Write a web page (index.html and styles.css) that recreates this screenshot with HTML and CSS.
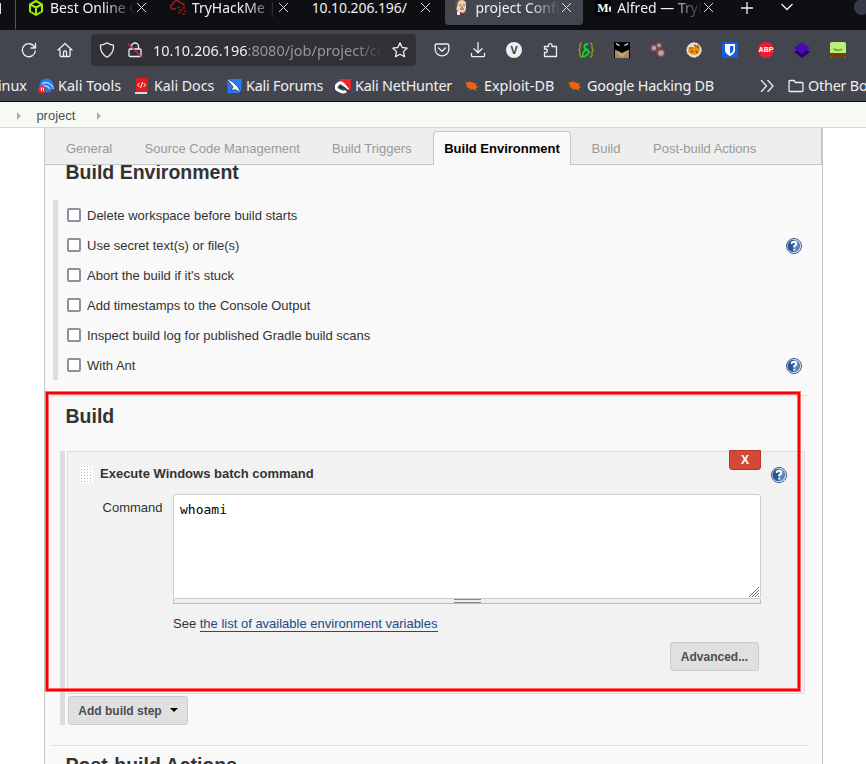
FILE: index.html
```
<!DOCTYPE html>
<html lang="en">
<head>
<meta charset="utf-8">
<title>project Config [Jenkins]</title>
<link rel="stylesheet" href="styles.css">
</head>
<body>
<header class="browser">
  <div class="tabs">
    <div class="tab-edge"><i></i></div>
    <div class="tab">
      <svg class="fav" viewBox="0 0 16 16"><path d="M8 1L14 4.300V11.500L8 15L2 11.500V4.300ZM2.500 4.600L8 7.500L13.500 4.600M8 7.500V14.500" fill="none" stroke="#9fef00" stroke-width="2" stroke-linejoin="round"/></svg>
      <span class="title t1">Best Online Cyber</span><i class="close"></i>
    </div>
    <div class="tab">
      <svg class="fav" viewBox="0 0 16 16"><path d="M6 9H3.500A2.500 2.500 0 0 1 3 4A4 4 0 0 1 10.500 3A3 3 0 0 1 14 6.500" fill="none" stroke="#b3121d" stroke-width="1.500"/><path d="M7 7.500h3M12 8h3M9 10h4M14 11h2M8 12.500h3M12 14h3" stroke="#85151c" stroke-width="1.500"/></svg>
      <span class="title t2">TryHackMe | Alfred</span><i class="close"></i>
    </div>
    <div class="tab noicon"><span class="title t3">10.10.206.196/</span><i class="close"></i></div>
    <div class="tab active">
      <svg class="fav" viewBox="0 0 16 16"><path d="M3 15L5 11H11L14 15Z" fill="#252a35"/><path d="M3 4Q3 0 8 0T13 4V9Q12 13 9 13Q4 12 3 8Z" fill="#efd1b2"/><path d="M2 6Q1 0 8 0L5 2L4 7L3 9Z" fill="#70503d"/><path d="M6 5h2M10 5h2M7 9h4M9 6v2" stroke="#755747"/><path d="M7 12l3 1 3-1v3l-3-1-2 1z" fill="#c52b35"/><path d="M4 11l3 1v3H4z" fill="#eee"/></svg>
      <span class="title t4">project Config</span><i class="close"></i>
    </div>
    <div class="tab">
      <span class="fav me">Me</span>
      <span class="title t5">Alfred — TryHack</span><i class="close"></i>
    </div>
    <svg class="plus" viewBox="0 0 12 12"><path d="M6 0V12M0 6H12"/></svg>
    <svg class="down" viewBox="0 0 12 8"><path d="M.5 1L6 6.500L11.500 1"/></svg>
    <i class="dot"></i>
  </div>

  <div class="toolbar">
    <svg class="ico nav" viewBox="0 0 16 16"><path d="M13.500 5A6.500 6.500 0 1 0 14.300 9M14.500 1.500V6H10"/></svg>
    <svg class="ico nav" viewBox="0 0 16 16"><path d="M1 8L8 1.500L15 8M3 7V13.500Q3 14.500 4 14.500H12Q13 14.500 13 13.500V7M6.500 14V10Q6.500 9 8 9T9.500 10V14"/></svg>
    <div class="url">
      <svg class="ico shield" viewBox="0 0 16 16"><path d="M8 .8Q11 3 14.500 3.200Q15 11.500 8 15.200Q1 11.500 1.500 3.200Q5 3 8 .8Z"/></svg>
      <svg class="ico lock" viewBox="0 0 16 16"><path d="M4.500 7V4.500A3.500 3.500 0 0 1 11.500 4.500V7M3 7H13Q14 7 14 8V13.500Q14 14.500 13 14.500H3Q2 14.500 2 13.500V8Q2 7 3 7Z"/><path class="slash" d="M1.500 2L15 15.500"/></svg>
      <span class="address">10.10.206.196<em>:8080/job/project/configure</em></span>
      <svg class="ico star" viewBox="0 0 16 16"><path d="M8 .9L10.200 5.500L15.200 6.100L11.500 9.600L12.500 14.700L8 12.200L3.500 14.700L4.500 9.600L.8 6.100L5.800 5.500Z"/></svg>
    </div>
    <div class="tools">
      <svg class="ico" viewBox="0 0 16 16"><path d="M2.500 2H13.500Q14.800 2 14.800 3.300V7.500A6.800 6.300 0 0 1 1.200 7.500V3.300Q1.200 2 2.500 2ZM4.500 6L8 9.300L11.500 6"/></svg>
      <svg class="ico" viewBox="0 0 16 16"><path d="M8 .5V10.500M4 6.800L8 10.800L12 6.800M1.500 11.500V13.500Q1.500 14.700 2.700 14.700H13.300Q14.500 14.700 14.500 13.500V11.500"/></svg>
      <span class="vbadge">V</span>
      <svg class="ico" viewBox="0 0 16 16"><path d="M2.500 14.500V10.500H4A1.800 1.800 0 0 0 4 7H2.500V4.500H6.500V3A1.800 1.800 0 0 1 10 3V4.500H14.500V14.500Z"/></svg>
      <svg viewBox="0 0 16 16"><path d="M4 1Q2 1 2 3V6L.8 8L2 10V13Q2 15 4 15M12 1Q14 1 14 3V6L15.200 8L14 10V13Q14 15 12 15" fill="none" stroke="#a89f12" stroke-width="1.200"/><path d="M10.500 2.500Q7 1 6.500 4T9.500 8.500T8 13.500T5.500 10.500Q6 8 10 7" fill="none" stroke="#12dc20" stroke-width="1.700"/></svg>
      <svg viewBox="0 0 16 16"><path d="M0 0H16V16H0Z"/><path d="M1 8L8 10L15 8V16H1Z" fill="#a8875c"/><path d="M1 8L8 12L15 8L8 16Z" fill="#c5a578"/><path d="M1 7H15L8 11Z"/><path d="M2 1L6 3.500L3 3ZM14 1L10 3.500L13 3Z" fill="#ddd" stroke="#ddd" stroke-width=".5"/></svg>
      <svg viewBox="0 0 16 16"><g fill="#b5a4a8" stroke="#874a4f" stroke-width="1.500"><circle cx="4" cy="6" r="3"/><circle cx="9" cy="3.500" r="2.500"/><circle cx="11" cy="11" r="3.500"/></g></svg>
      <svg viewBox="0 0 16 16"><circle cx="8" cy="8" r="7.200" fill="#e8dfc8" stroke="#fff" stroke-dasharray="2 1"/><path d="M2 8Q3 5 8 5L12 2Q16 7 12 12L8 13L3 11Z" fill="#ec8e16"/><path d="M3 6L6 6M8 3L10 4M12 4L11 6M5 10L7 9M10 9L11 11" stroke="#6b4018" stroke-width="1.100"/></svg>
      <svg viewBox="0 0 16 16"><rect width="16" height="16" rx="2" fill="#175ddc"/><path d="M3 2H13V8Q13 11.500 8 14Q3 11.500 3 8Z" fill="#fff"/><path d="M8 4H11.300V8Q11.300 10.200 8 12Z" fill="#175ddc"/></svg>
      <span class="abp">ABP</span>
      <svg viewBox="0 0 16 16"><path d="M0 10L8 5L16 10L8 16Z" fill="#23046f"/><path d="M0 6L8 0L16 6L8 12Z" fill="#4a08b5"/></svg>
      <svg viewBox="0 0 16 16"><rect width="16" height="16" rx="2" fill="#b9f078"/><path d="M0 11H16V14Q16 16 14 16H2Q0 16 0 14Z" fill="#763e0b"/><path d="M3 6.500Q7 6 8 8Q10 6 13 7Q11 9 8 9Q4 9 3 6.500Z" fill="#5aa52b"/></svg>
    </div>
  </div>

  <nav class="bookmarks">
    <span class="inux">inux</span>
    <span><svg viewBox="0 0 16 16"><circle cx="8.500" cy="7.500" r="7" fill="#2878f0"/><path d="M4 6Q8 3 12 6T15 11M3 9Q9 6 12 11" fill="none" stroke="#b9dcff" stroke-width="1.300"/><circle cx="4" cy="11.500" r="3.800" fill="#e52b36"/><path d="M2.500 10h1v3M4.500 10h1v3" stroke="#fff" fill="none"/></svg>Kali Tools</span>
    <span class="docs"><svg viewBox="0 0 16 16"><path d="M2 0H14V16H2Z" fill="#df1b1b"/><path d="M1 14H13V16H1Z" fill="#ddd"/><path d="M5.500 5L3.500 7L5.500 9M9.500 5L11.500 7L9.500 9M8.500 4L6.500 10" stroke="#fff" fill="none"/></svg>Kali Docs</span>
    <span class="tight"><svg viewBox="0 0 16 16"><path d="M1 1H16L15 15H2Z" fill="#2978f5"/><path d="M0 0L7 4L12 9L15 15L10 12L5 12L7 9Z" fill="#f5f5f5" stroke="#182536" stroke-width=".7"/></svg>Kali Forums</span>
    <span class="tight"><svg viewBox="0 0 16 16"><path d="M3 1H16V13L12 9Z" fill="#f02430"/><path d="M13 12L8 6Q5 3 2 7T5 13Q9 15 11 13" fill="none" stroke="#fff" stroke-width="3"/><path d="M5 10Q6 6 13 13" stroke="#202b38" stroke-width="1.500" fill="none"/></svg>Kali NetHunter</span>
    <span><svg viewBox="0 0 16 16"><use href="#bug"/></svg>Exploit-DB</span>
    <span class="tight"><svg viewBox="0 0 16 16"><g id="bug" fill="#ed6211"><ellipse cx="7.500" cy="7.500" rx="5.500" ry="3.300" transform="rotate(25 7.500 7.500)"/><path d="M1 4L6 5L5 3L9 6L13 5L11 8L15 9L11 10L13 13L9 11L5 12L6 10L2 9L4 8Z"/></g></svg>Google Hacking DB</span>
    <svg class="more" viewBox="0 0 14 12"><path d="M1 0L6.500 6L1 12M7.500 0L13 6L7.500 12"/></svg>
    <span class="tight"><svg class="folder" viewBox="0 0 16 16"><path d="M2 2.500H6L7.500 4.500H14Q15 4.500 15 5.500V12.500Q15 13.500 14 13.500H2Q1 13.500 1 12.500V3.500Q1 2.500 2 2.500Z"/></svg>Other Bookmarks</span>
  </nav>
</header>

<div class="crumbs"><i></i><span>project</span><i></i></div>

<main class="panel">
  <nav class="sections">
    <a class="s1">General</a><a class="s2">Source Code Management</a><a class="s3">Build Triggers</a><a class="current">Build Environment</a><a class="s5">Build</a><a class="s6">Post-build Actions</a>
  </nav>
  <section class="env">
    <h2>Build Environment</h2>
    <div class="options">
      <label><i class="box"></i><span>Delete workspace before build starts</span></label>
      <label><i class="box"></i><span>Use secret text(s) or file(s)</span><svg class="help" viewBox="0 0 16 16"><g id="help"><circle cx="8" cy="8" r="7.500" fill="#f8faff" stroke="#31588f"/><circle cx="8" cy="8" r="6.200" fill="#5f86bd"/><path d="M3 12A6.200 6.200 0 0 1 8 1.800V14A6 6 0 0 1 3 12Z" fill="#2c5795"/><path d="M5.700 6Q5.700 3.800 8 3.800T10.300 6Q10.300 7.200 8.200 8.200V9.500M8.200 10.700V12.500" fill="none" stroke="#fff" stroke-width="1.900"/></g></svg></label>
      <label><i class="box"></i><span>Abort the build if it's stuck</span></label>
      <label><i class="box"></i><span>Add timestamps to the Console Output</span></label>
      <label><i class="box"></i><span>Inspect build log for published Gradle build scans</span></label>
      <label><i class="box"></i><span>With Ant</span><svg class="help" viewBox="0 0 16 16"><use href="#help"/></svg></label>
    </div>
  </section>
  <section class="build">
    <h2>Build</h2>
    <div class="steps">
      <div class="step">
        <button class="remove">X</button>
        <svg class="help" viewBox="0 0 16 16"><use href="#help"/></svg>
        <div class="step-title"><i class="grip"></i><b>Execute Windows batch command</b></div>
        <div class="field">
          <span class="label">Command</span>
          <div class="editor">
            <div class="code">whoami<svg class="corner" viewBox="0 0 10 10"><path d="M0 10L10 0M3 10L10 3M6 10L10 6M9 10L10 9"/></svg></div>
            <div class="stretch"><i></i></div>
            <p>See <a>the list of available environment variables</a></p>
          </div>
        </div>
        <button class="btn advanced">Advanced...</button>
      </div>
      <button class="btn add">Add build step<i></i></button>
    </div>
  </section>
  <section class="post"><h2>Post-build Actions</h2></section>
</main>
<div class="highlight"></div>
</body>
</html>
```
FILE: styles.css
```
* { box-sizing: border-box; }
html, body { margin: 0; height: 764px; overflow: hidden; }
body {
  position: relative;
  width: 866px;
  background: #fff;
  color: #333;
  font: 13px/18px "Liberation Sans", Arial, sans-serif;
}
svg { display: block; flex: none; }
i { font-style: normal; display: block; flex: none; }
button { font-family: inherit; margin: 0; }

/* Browser chrome */
.browser {
  height: 102px;
  overflow: hidden;
  background: #44464f;
  border-bottom: 1px solid #0c0d12;
  color: #f0f0f2;
  font: 14.4px/20px "Noto Sans", sans-serif;
}
.tabs { display: flex; height: 30px; background: #0e0f13; overflow: hidden; font-size: 14px; }
.tab-edge { width: 16px; height: 29px; padding-top: 3px; margin-right: 4px; border-right: 1px solid #55565e; flex: none; }
.tab-edge i { width: 1px; height: 11px; background: #e0e0e2; }
.tab { display: flex; width: 142px; height: 25px; padding: 0 0 8px 8px; align-items: center; flex: none; }
.tab.active { width: 138px; margin-right: 4px; background: #44464f; border-radius: 0 0 4px 4px; }
.tab + .tab { margin-left: -.2px; }
.fav { width: 16px; height: 16px; margin: -2px 6px 0 0; flex: none; }
.me { background: #000; color: #fff; font: bold 12px/16px "Liberation Serif", serif; overflow: hidden; padding-left: 2px; border-radius: 2px; }
.title { width: 87px; margin-top: -2px; overflow: hidden; white-space: nowrap; flex: none; -webkit-mask-image: linear-gradient(90deg, #000 62%, transparent 98%); }
.t3 { width: 109px; letter-spacing: -.1px; -webkit-mask-image: none; }
.close { width: 9px; height: 9px; margin-top: -2px; background: linear-gradient(45deg, transparent 45%, #ddd 45% 55%, transparent 55%), linear-gradient(-45deg, transparent 45%, #ddd 45% 55%, transparent 55%); }
.plus, .down { fill: none; stroke: #f0f0f2; stroke-width: 1.3; }
.plus { width: 12px; height: 12px; margin: 2px 0 0 12px; }
.down { width: 12px; height: 8px; margin: 3px 0 0 28px; }
.dot { width: 16px; height: 16px; margin: -1px 0 0 61px; border-radius: 50%; background: #353a4a; }

.toolbar { display: flex; height: 40px; padding-left: 11px; align-items: center; }
.toolbar svg { width: 16px; height: 16px; }
.ico { fill: none; stroke: #eeeef0; stroke-width: 1.3; stroke-linejoin: round; stroke-linecap: round; }
.nav { margin: 0 9.500px 0 10px; }
.url { display: flex; width: 325px; height: 32px; margin-left: 9px; padding-left: 8px; align-items: center; background: #303137; border-radius: 4px; }
.lock { margin: 0 10px 0 12px; }
.lock .slash { stroke: #e22850; }
.address { width: 235px; overflow: hidden; white-space: nowrap; font-size: 14.5px; -webkit-mask-image: linear-gradient(90deg, #000 86%, transparent 98%); }
.address em { color: #96979d; font-style: normal; }
.star { margin-left: 4px; }
.tools { display: flex; gap: 20px; margin-left: 18px; align-items: center; }
.vbadge, .abp { width: 16px; height: 16px; border-radius: 50%; text-align: center; flex: none; }
.vbadge { background: #eee; color: #44464f; font: bold 11px/16px "Noto Sans"; }
.abp { background: #e71d36; color: #fff; font: bold 7px/16px "Liberation Sans"; }

.bookmarks { display: grid; grid-template-columns: 38px 96px 92px 109px 129px 103px 193px 28px 78px; height: 31px; align-items: center; }
.bookmarks span { display: flex; align-items: center; gap: 4px; white-space: nowrap; }
.bookmarks .docs { font-size: 14.2px; }
.bookmarks .tight { letter-spacing: -.22px; }
.bookmarks span svg { width: 16px; height: 16px; }
.bookmarks .inux { width: 27px; justify-content: flex-end; }
.bookmarks .more { width: 14px; height: 12px; fill: none; stroke: #f0f0f2; stroke-width: 1.3; }
.bookmarks .folder { fill: none; stroke: #f0f0f2; stroke-width: 1.3; }

/* Breadcrumbs */
.crumbs { display: flex; height: 26px; padding: 0 0 0 17px; align-items: center; border-bottom: 1px solid #d3d7cf; background: #f6faf2; color: #4d545d; }
.crumbs span { margin: 2px 22px 0 15.4px; }
.crumbs i { border: 4px solid transparent; border-left-color: #aeb0ad; border-right: 0; margin-top: 2px; }

/* Configuration form */
.panel { width: 779px; height: 636px; margin-left: 44px; border: solid #c6c6c6; border-width: 0 1px; background: #f9f9f9; overflow: hidden; }
.sections { position: relative; display: flex; height: 37px; padding: 3px 0 0 21px; background: #eee; border-bottom: 1px solid #c6c6c6; border-right: 1px solid #c6c6c6; color: #999; line-height: 35px; white-space: nowrap; }
.sections a { flex: none; }
.s1 { width: 78.500px; }
.s2 { width: 187.500px; }
.s3 { width: 101px; }
.current { width: 138px; height: 34px; border: 1px solid #c6c6c6; border-bottom: 0; border-radius: 4px 4px 0 0; background: #f9f9f9; color: #000; font-weight: bold; text-align: center; line-height: 33px; }
.s5 { margin-left: 20.500px; width: 61.500px; }
h2 { margin: 0; font-size: 19.5px; line-height: 24px; color: #333; }
.env { height: 236px; margin: -5px 15px 0 6px; border-bottom: 1px solid #ddd; }
.env h2, .build h2, .post h2 { padding-left: 14.5px; }
.options { width: 752px; margin: 16px 0 0 2px; border-left: 5px solid #ddd; }
.options label { display: flex; height: 30px; padding-left: 9px; align-items: center; }
.options span { margin-top: 2px; }
.box { width: 14px; height: 14px; margin-right: 6px; border: 2px solid #8f8f9d; border-radius: 2px; background: #fff; }
.help { width: 16px; height: 16px; }
.options .help { margin: 1px 3px 0 auto; }
.build { height: 350px; margin: 0 15px 0 6px; padding-top: 8px; border-bottom: 1px solid #ddd; }
.steps { height: 274px; margin: 23px 0 0 9px; padding-left: 2px; border-left: 5px solid #ddd; }
.step { position: relative; width: 738px; height: 243px; padding: 13px 0 0 12px; border: 1px solid #ddd; background: #f2f2f2; }
.step-title { display: flex; height: 18px; align-items: center; }
.grip { width: 13px; height: 18px; margin-right: 7px; background: radial-gradient(circle, #b8b8b8 0 .8px, transparent 1px) 0 0 / 3px 3px #fff; }
.remove { position: absolute; top: -2px; right: 43px; width: 32px; height: 20px; padding: 0; border: 1px solid #c03326; border-radius: 0 0 3px 3px; background: #d24939; color: #fff; font: bold 12px/18px "Liberation Sans"; }
.step > .help { position: absolute; top: 15px; right: 17px; }
.field { display: flex; padding-top: 11px; }
.label { width: 82.500px; margin-right: 10.500px; padding-top: 5px; text-align: right; }
.editor { width: 588px; }
.code { position: relative; height: 105px; padding: 6px; border: 1px solid #ccc; border-radius: 3px; background: #fff; color: #000; font: 13px/18px "DejaVu Sans Mono", monospace; }
.corner { position: absolute; right: 1px; bottom: 1px; width: 10px; height: 10px; stroke: #666; stroke-width: 1; }
.stretch { height: 5px; border: 1px solid #bbb; border-top: 0; background: #eee; }
.stretch i { width: 27px; height: 4px; margin: 0 auto; border: solid #888; border-width: 1px 0; }
.editor p { margin: 11px 0 0; }
.editor a { color: #204a87; border-bottom: 1px solid #204a87; }
.btn { display: flex; height: 29px; align-items: center; justify-content: center; border: 1px solid #ccc; border-radius: 3px; background: #e0e0e0; color: #4d4d4d; font-size: 12px; font-weight: bold; padding: 0; }
.advanced { width: 89px; margin: 9px 0 0 590px; }
.add { width: 120px; margin: 2px 0 0 1px; }
.add i { margin: -2px 0 0 8px; border: 4px solid transparent; border-top-color: #000; border-bottom: 0; }
.post { padding: 7px 0 0 6px; }
.post h2 { padding-left: 14.5px; }

/* Marker drawn over the build step */
.highlight { position: absolute; left: 46px; top: 392px; width: 754px; height: 299px; border: 2px solid #f00; box-shadow: 0 0 0 1px rgba(255, 0, 0, .55), inset 0 0 0 1px rgba(255, 0, 0, .55); }
```
